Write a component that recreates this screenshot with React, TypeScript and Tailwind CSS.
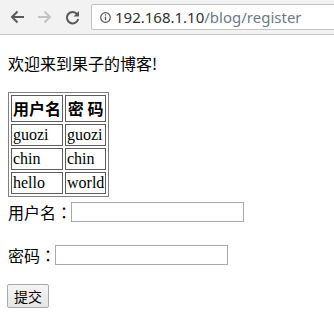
const cjk = "font-['Noto_Sans_CJK_SC',sans-serif]";
const serif = "font-['Liberation_Serif','Noto_Sans_CJK_SC',serif]";
const colon = "font-['Noto_Sans_CJK_JP',sans-serif]";

const users = [
  { name: "guozi", pwd: "guozi" },
  { name: "chin", pwd: "chin" },
  { name: "hello", pwd: "world" },
];

function BackIcon() {
  return (
    <svg width="15" height="14" viewBox="0 0 15 14" fill="none">
      <path d="M14 7H2.5M7.5 1.5 2 7l5.5 5.5" stroke="#5a5a5a" strokeWidth="2" />
    </svg>
  );
}

function ForwardIcon() {
  return (
    <svg width="15" height="14" viewBox="0 0 15 14" fill="none">
      <path d="M1 7h11.5M7.5 1.5 13 7l-5.5 5.5" stroke="#c3c3c3" strokeWidth="2" />
    </svg>
  );
}

function ReloadIcon() {
  return (
    <svg width="15" height="15" viewBox="0 0 15 15" fill="none">
      <path d="M12.2 4.2A5.7 5.7 0 1 0 13.2 9" stroke="#5a5a5a" strokeWidth="2" />
      <path d="M14 1v5.5H8.5z" fill="#5a5a5a" />
    </svg>
  );
}

function InfoIcon() {
  return (
    <svg width="11" height="11" viewBox="0 0 11 11" fill="none">
      <circle cx="5.5" cy="5.5" r="4.8" stroke="#555" strokeWidth="1.2" />
      <path d="M5.5 4.6v3.6" stroke="#555" strokeWidth="1.3" />
      <circle cx="5.5" cy="3.1" r="0.75" fill="#555" />
    </svg>
  );
}

export default function App() {
  return (
    <div className={`w-[334px] h-[317px] overflow-hidden bg-white text-black ${serif}`}>
      {/* browser toolbar */}
      <div className="flex items-center h-[35px] bg-[#f2f2f2] border-b border-[#c6c6c6]">
        <div className="ml-[10px] flex">
          <BackIcon />
        </div>
        <div className="ml-[12px] flex">
          <ForwardIcon />
        </div>
        <div className="ml-[13px] flex">
          <ReloadIcon />
        </div>
        <div className="ml-[11px] flex items-center h-[26px] w-[260px] shrink-0 bg-white border border-[#c4c4c4] rounded-[2px] pl-[8px]">
          <InfoIcon />
          <span className="ml-[4px] font-['Noto_Sans',sans-serif] text-[15px] leading-none whitespace-nowrap">
            <span className="text-[#303030]">192.168.1.10</span>
            <span className="text-[#6e7884]">/blog/register</span>
          </span>
        </div>
      </div>

      {/* page */}
      <p className={`mt-[16px] px-[8px] text-[16px] leading-[25px] ${cjk}`}>欢迎来到果子的博客!</p>

      <table className="mt-[16px] ml-[8px] border-separate border-spacing-[2px] border border-[#808080]">
        <thead>
          <tr>
            <th className={`border border-[#5c5c5c] p-[1px] text-[16px] leading-[23px] font-bold ${cjk}`}>用户名</th>
            <th className={`border border-[#5c5c5c] p-[1px] text-[16px] leading-[23px] font-bold whitespace-pre ${cjk}`}>密 码</th>
          </tr>
        </thead>
        <tbody>
          {users.map((u) => (
            <tr key={u.name}>
              <td className="border border-[#5c5c5c] p-[1px] text-[16px] leading-[18px] text-left">{u.name}</td>
              <td className="border border-[#5c5c5c] p-[1px] text-[16px] leading-[18px] text-left">{u.pwd}</td>
            </tr>
          ))}
        </tbody>
      </table>

      <div className={`mt-[5px] px-[8px] flex items-center h-[20px] text-[16px] ${cjk}`}>
        <span className="leading-[20px]">
          用户名<span className={colon}>：</span>
        </span>
        <input type="text" className="-ml-[1px] w-[173px] h-[20px] border border-[#a9a9a9] bg-white outline-none" />
      </div>

      <div className={`mt-[23px] px-[8px] flex items-center h-[20px] text-[16px] ${cjk}`}>
        <span className="leading-[20px]">
          密码<span className={colon}>：</span>
        </span>
        <input type="password" className="-ml-[1px] w-[173px] h-[20px] border border-[#a9a9a9] bg-white outline-none" />
      </div>

      <div className="mt-[19px] px-[7px]">
        <button
          type="button"
          className={`w-[42px] h-[24px] flex items-center justify-center border border-[#a9a9a9] rounded-[2px] bg-[linear-gradient(#f4f4f4,#e6e6e6)] text-[14px] leading-none text-black ${cjk}`}
        >
          提交
        </button>
      </div>
    </div>
  );
}
